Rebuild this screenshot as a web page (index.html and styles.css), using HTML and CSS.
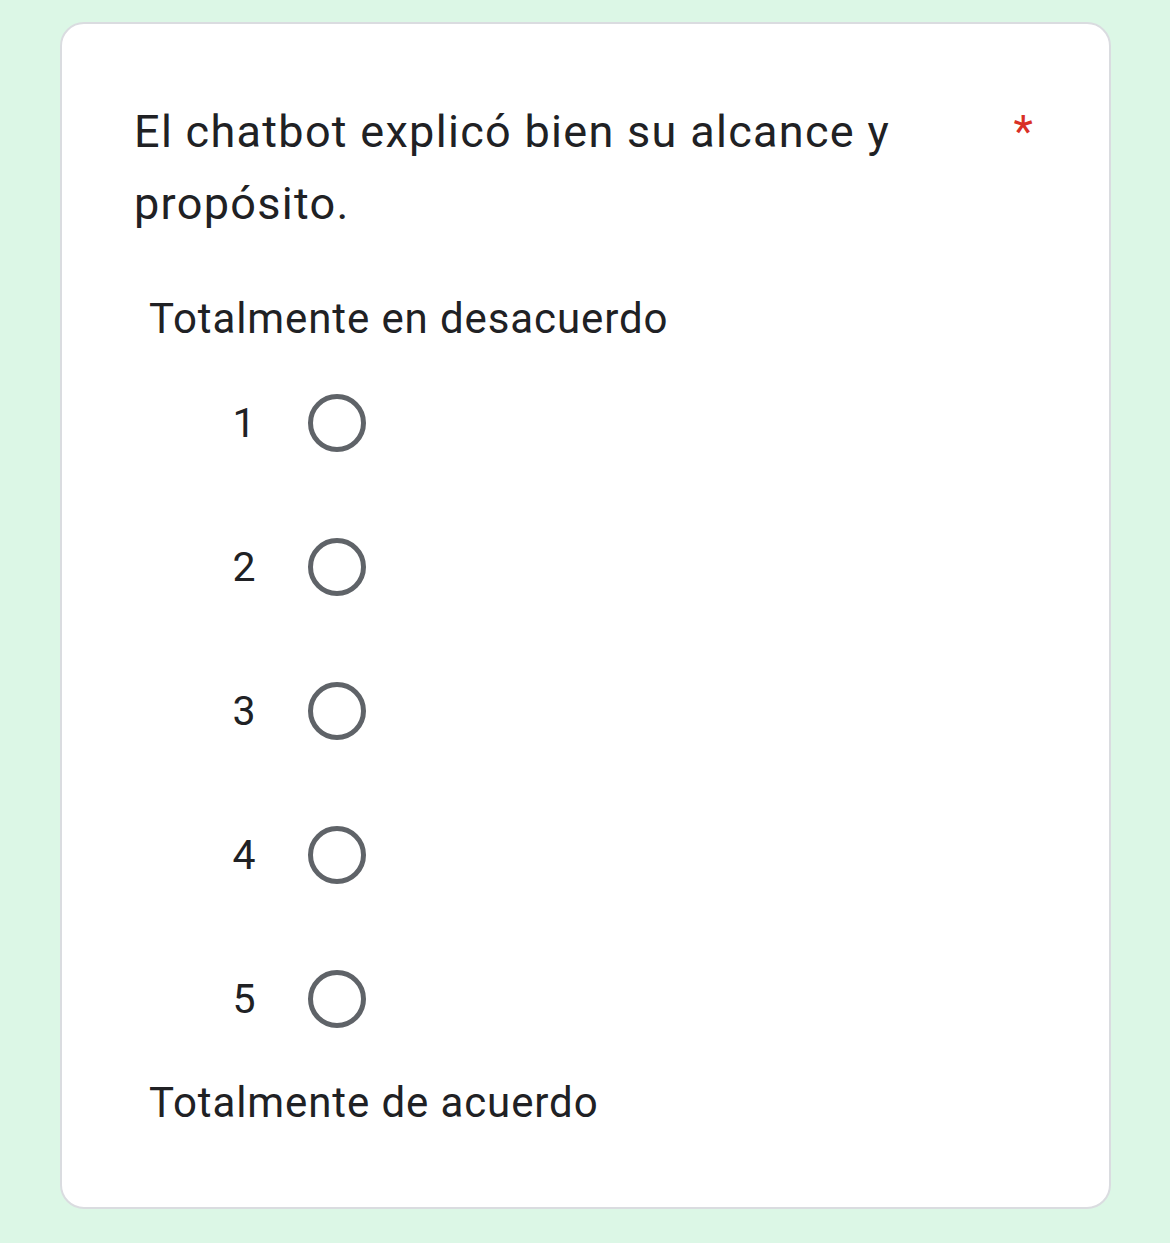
FILE: index.html
```html
<!DOCTYPE html>
<html lang="es">
<head>
<meta charset="utf-8">
<link rel="stylesheet" href="styles.css">
</head>
<body>
<div class="card">
  <div class="title-row">
    <div class="title">El chatbot explicó bien su alcance y propósito.</div>
    <span class="req">*</span>
  </div>
  <div class="label">Totalmente en desacuerdo</div>
  <div class="scale">
    <div class="opt"><span class="num">1</span><span class="radio"></span></div>
    <div class="opt"><span class="num">2</span><span class="radio"></span></div>
    <div class="opt"><span class="num">3</span><span class="radio"></span></div>
    <div class="opt"><span class="num">4</span><span class="radio"></span></div>
    <div class="opt"><span class="num">5</span><span class="radio"></span></div>
  </div>
  <div class="label">Totalmente de acuerdo</div>
</div>
</body>
</html>
```

FILE: styles.css
```css
html, body {
  margin: 0;
  padding: 0;
}
body {
  background: #dcf7e6;
  font-family: Roboto, "Noto Sans", sans-serif;
  color: #202124;
  padding-top: 22px;
  height: 1243px;
  box-sizing: border-box;
}
.card {
  margin-left: 60px;
  width: 1051px;
  box-sizing: border-box;
  background: #fff;
  border: 2px solid #dadce0;
  border-radius: 24px;
  padding: 72px 76px 72px 72px;
}
.title-row {
  display: flex;
  align-items: flex-start;
}
.title {
  flex: 1;
  font-size: 45px;
  line-height: 72px;
  letter-spacing: 1.3px;
  padding-right: 70px;
}
.req {
  color: #d93025;
  font-size: 45px;
  line-height: 72px;
}
.label {
  font-size: 42px;
  line-height: 64px;
  letter-spacing: 0.9px;
  padding-left: 15px;
}
.title-row + .label {
  margin-top: 47px;
}
.scale {
  display: flex;
  flex-direction: column;
}
.opt {
  height: 144px;
  display: flex;
  align-items: center;
  padding-left: 90px;
}
.num {
  width: 40px;
  text-align: center;
  font-size: 41px;
  margin-right: 44px;
}
.radio {
  width: 48px;
  height: 48px;
  border: 5.5px solid #5f6368;
  border-radius: 50%;
}
```
